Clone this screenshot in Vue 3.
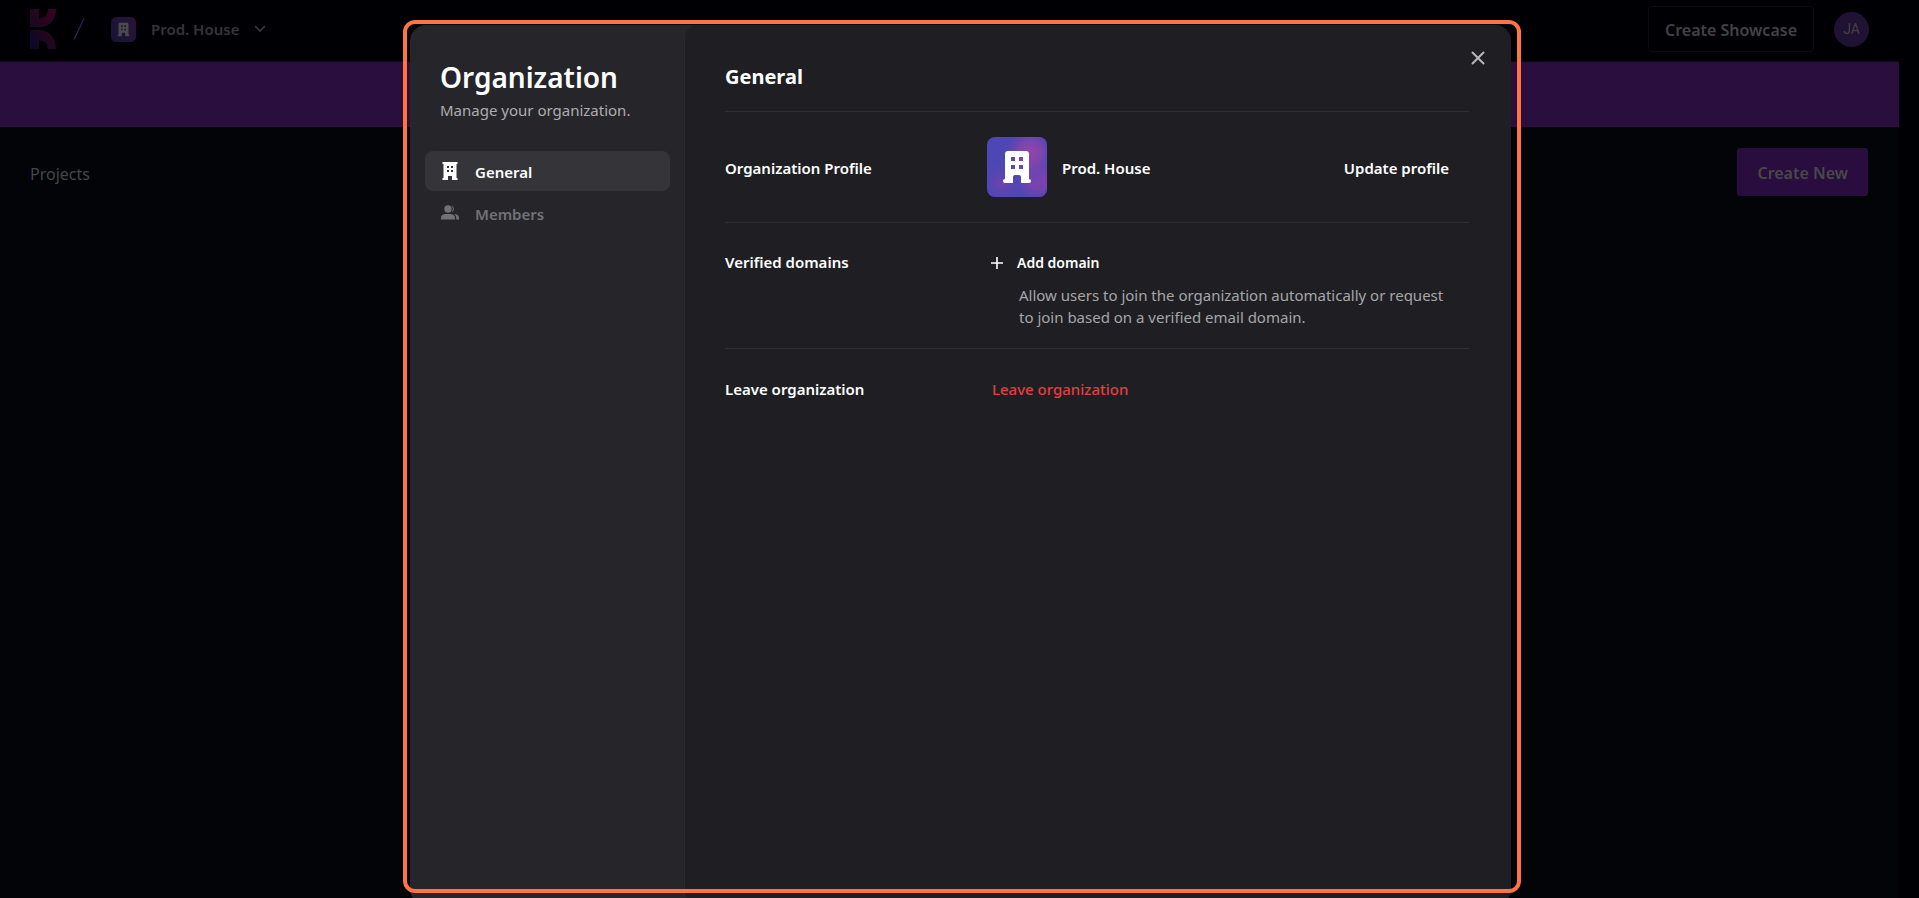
<script setup>
const navItems = [
  { id: 'general', label: 'General', active: true },
  { id: 'members', label: 'Members', active: false },
]
</script>

<template>
  <div class="screen">
    <div class="page">
      <header class="topbar">
        <a class="logo" href="#" aria-label="Home">
          <svg width="26" height="40" viewBox="0 0 26 40">
            <defs>
              <linearGradient id="logoFill" x1="1" y1="0" x2="0" y2="1">
                <stop offset="0" stop-color="#38031f" />
                <stop offset="0.5" stop-color="#21071f" />
                <stop offset="1" stop-color="#09082a" />
              </linearGradient>
            </defs>
            <path fill="url(#logoFill)" d="M0 0h9v9.500q9-1 9-9.500h8c0 11-7 18-17 18H0zM0 21h9c10 0 17 8 17 19h-8q0-8-9-9v9H0z" />
          </svg>
        </a>
        <svg class="slash" width="12" height="22" viewBox="0 0 12 22"><path d="M11 0.500 1 21.500" stroke="#382150" stroke-width="1.200" /></svg>
        <button class="org-switch" type="button">
          <svg class="org-icon" width="25" height="25" viewBox="0 0 60 60">
            <defs>
              <linearGradient id="dimFill" x1="0" y1="0.800" x2="1" y2="0.200">
                <stop offset="0" stop-color="#171438" />
                <stop offset="1" stop-color="#2a1437" />
              </linearGradient>
            </defs>
            <rect width="60" height="60" rx="13" fill="url(#dimFill)" />
            <path fill="#4a4a4c" fill-rule="evenodd" d="M18 17a3 3 0 0 1 3-3h18a3 3 0 0 1 3 3v25a2 2 0 0 1 0 4h-8v-6q0-2-2-2h-4q-2 0-2 2v6h-8a2 2 0 0 1 0-4zm6 3v4h4v-4zm8 0v4h4v-4zm-8 8v4h4v-4zm8 0v4h4v-4z" />
          </svg>
          <span>Prod. House</span>
          <svg width="12" height="8" viewBox="0 0 12 8"><path d="M1.500 1.500 6 6l4.500-4.500" fill="none" stroke="#3a3b3e" stroke-width="1.600" stroke-linecap="round" /></svg>
        </button>
        <button class="showcase" type="button">Create Showcase</button>
        <button class="user" type="button">JA</button>
      </header>
      <div class="banner"></div>
      <main class="projects">
        <h1>Projects</h1>
        <button class="create" type="button">Create New</button>
      </main>
    </div>

    <div class="overlay">
      <section class="dialog" role="dialog" aria-label="Organization">
        <aside class="sidebar">
          <h2>Organization</h2>
          <p>Manage your organization.</p>
          <nav>
            <button v-for="item in navItems" :key="item.id" type="button" class="nav-item" :class="{ active: item.active }">
              <svg v-if="item.id === 'general'" width="18" height="18" viewBox="0 0 18 18">
                <path fill="currentColor" fill-rule="evenodd" d="M1.500 0h15v2h-1v14h1v2H11v-4H7v4H1.500v-2h1V2h-1zM6 4v2h2V4zm4 0v2h2V4zM6 8v2h2V8zm4 0v2h2V8z" />
              </svg>
              <svg v-else width="18" height="18" viewBox="0 0 18 18">
                <g fill="currentColor">
                  <circle cx="7" cy="5" r="3.700" />
                  <path d="M0 15.500V14c0-2.500 2-4 4.500-4h5c2.500 0 4.500 1.500 4.500 4v1.500zM10.300 1.500a3.700 3.700 0 0 1 0 7.100 5.300 5.300 0 0 0 0-7.100zM13 10c3 0 5 1.500 5 4v1.500h-2.800V14c0-1.700-.8-3.100-2.200-4z" />
                </g>
              </svg>
              <span>{{ item.label }}</span>
            </button>
          </nav>
        </aside>

        <div class="content">
          <button class="close" type="button" aria-label="Close">
            <svg width="14" height="14" viewBox="0 0 14 14"><path d="m1.500 1.500 11 11m0-11-11 11" stroke="#b7b7b9" stroke-width="2" stroke-linecap="round" /></svg>
          </button>
          <h3>General</h3>
          <div class="row profile">
            <h4>Organization Profile</h4>
            <div class="profile-body">
              <svg width="60" height="60" viewBox="0 0 60 60">
                <defs>
                  <radialGradient id="glowTop" cx="0.720" cy="0.260" r="0.480">
                    <stop offset="0" stop-color="#9345a9" />
                    <stop offset="0.400" stop-color="#8545ac" stop-opacity="0.850" />
                    <stop offset="1" stop-color="#4c47b5" stop-opacity="0" />
                  </radialGradient>
                  <radialGradient id="glowRight" cx="0.850" cy="0.700" r="0.450">
                    <stop offset="0" stop-color="#7b43ae" />
                    <stop offset="0.400" stop-color="#7843ae" stop-opacity="0.900" />
                    <stop offset="1" stop-color="#4c47b5" stop-opacity="0" />
                  </radialGradient>
                  <radialGradient id="glowLeft" cx="0.250" cy="0.780" r="0.400">
                    <stop offset="0" stop-color="#7043ac" />
                    <stop offset="1" stop-color="#4c47b5" stop-opacity="0" />
                  </radialGradient>
                </defs>
                <rect width="60" height="60" rx="8" fill="#4c47b5" />
                <rect width="60" height="60" rx="8" fill="url(#glowLeft)" />
                <rect width="60" height="60" rx="8" fill="url(#glowRight)" />
                <rect width="60" height="60" rx="8" fill="url(#glowTop)" />
                <path fill="#fff" fill-rule="evenodd" d="M18 17a3 3 0 0 1 3-3h18a3 3 0 0 1 3 3v25a2 2 0 0 1 0 4h-8v-6q0-2-2-2h-4q-2 0-2 2v6h-8a2 2 0 0 1 0-4zm6 3v4h4v-4zm8 0v4h4v-4zm-8 8v4h4v-4zm8 0v4h4v-4z" />
              </svg>
              <span class="name">Prod. House</span>
              <button class="update" type="button">Update profile</button>
            </div>
          </div>
          <div class="row domains">
            <h4>Verified domains</h4>
            <div>
              <button class="add" type="button">
                <svg width="12" height="12" viewBox="0 0 12 12"><path d="M6 0v12M0 6h12" stroke="currentColor" stroke-width="1.600" /></svg>
                <span>Add domain</span>
              </button>
              <p>Allow users to join the organization automatically or request to join based on a verified email domain.</p>
            </div>
          </div>
          <div class="row leave-row">
            <h4>Leave organization</h4>
            <button class="leave" type="button">Leave organization</button>
          </div>
        </div>
      </section>
      <div class="focus-frame"></div>
    </div>
  </div>
</template>

<style>
body {
  margin: 0;
  background: #000004;
}
</style>

<style scoped>
.screen {
  position: relative;
  height: 100vh;
  overflow: hidden;
  font-family: "Noto Sans", "Open Sans", sans-serif;
  font-size: 15px;
  line-height: 22px;
}
h1, h2, h3, h4, p {
  margin: 0;
}
button {
  padding: 0;
  border: 0;
  background: none;
  color: inherit;
  font: inherit;
  cursor: pointer;
}
svg {
  display: block;
  flex: none;
}
.page {
  display: flex;
  flex-direction: column;
  height: 100%;
  margin-right: 20px;
  background: #030408;
}
.topbar {
  display: flex;
  align-items: center;
  height: 62px;
  padding: 0 30px 3px;
  box-sizing: border-box;
  background: #000004;
  border-bottom: 1px solid #0b0911;
}
.slash {
  margin: 0 26px 0 17px;
}
.org-switch {
  display: flex;
  align-items: center;
  gap: 15px;
  color: #343538;
  font-weight: 600;
}
.showcase {
  height: 46px;
  margin-left: auto;
  padding: 2px 16px 0;
  border: 1px solid #0b0c11;
  border-radius: 4px;
  color: #434343;
  font-size: 16px;
  font-weight: 600;
}
.user {
  width: 35px;
  height: 35px;
  margin-left: 20px;
  border-radius: 50%;
  background: #1f1232;
  color: #444048;
  font-family: Roboto, sans-serif;
  font-size: 14px;
}
.banner {
  height: 65px;
  background: #290e3e;
}
.projects {
  display: flex;
  justify-content: space-between;
  padding: 21px 31px 0 30px;
}
.projects h1 {
  color: #454647;
  font-size: 16px;
  font-weight: 400;
  line-height: 52px;
}
.create {
  height: 48px;
  padding: 2px 20px 0;
  border-radius: 3px;
  background: #290d3e;
  color: #484848;
  font-size: 16px;
  font-weight: 600;
}
.overlay {
  position: absolute;
  inset: 0;
  display: flex;
  justify-content: center;
  align-items: flex-start;
  padding: 25px 0 0 2px;
}
.dialog {
  display: flex;
  width: 1101px;
  max-width: 90%;
  min-height: 880px;
  border-radius: 16px;
  overflow: hidden;
  background: #26262a;
  color: #fff;
}
.sidebar {
  flex: none;
  width: 245px;
  padding: 30px 14px 30px 15px;
}
.sidebar h2 {
  padding: 4px 15px 0;
  font-size: 28px;
  font-weight: 600;
  line-height: 36px;
}
.sidebar p {
  padding: 4px 15px 0;
  color: #adadaf;
}
nav {
  display: flex;
  flex-direction: column;
  gap: 2px;
  margin-top: 30px;
}
.nav-item {
  display: flex;
  align-items: center;
  gap: 16px;
  height: 40px;
  padding: 0 16px;
  border-radius: 8px;
  color: #727275;
  font-weight: 600;
}
.nav-item span {
  padding-top: 2px;
}
.nav-item.active {
  background: #353539;
  color: #fff;
}
.content {
  position: relative;
  flex: 1;
  padding: 36px 42px 36px 40px;
  border-left: 1px solid #2b2b2f;
  border-radius: 12px 0 0 12px;
  background: #1f1f23;
}
.close {
  position: absolute;
  top: 16px;
  right: 16px;
  padding: 10px;
}
h3 {
  padding-bottom: 18px;
  font-size: 20px;
  font-weight: 700;
  line-height: 32px;
}
.row {
  display: grid;
  grid-template-columns: 262px 1fr;
  border-top: 1px solid #2f2f33;
}
h4 {
  font-size: 15px;
  font-weight: 600;
}
.profile {
  align-items: center;
  height: 110px;
}
.profile-body {
  display: flex;
  align-items: center;
  gap: 15px;
  font-weight: 600;
}
.profile h4,
.name,
.update {
  padding-top: 2px;
}
.update {
  margin-left: auto;
  margin-right: 20px;
}
.domains {
  padding: 28px 0 18px;
}
.add {
  display: flex;
  align-items: center;
  gap: 14px;
  padding: 1px 0 0 4px;
  font-size: 14px;
  font-weight: 600;
}
.domains p {
  padding: 10px 16px 2px 32px;
  color: #a6a6a8;
}
.leave-row {
  padding-top: 29px;
}
.leave {
  justify-self: start;
  padding-left: 5px;
  color: #e13f3f;
  font-weight: 500;
}
.focus-frame {
  position: absolute;
  top: 20px;
  right: 398px;
  bottom: 5px;
  left: 403px;
  border: 4px solid #ff7441;
  border-radius: 12px;
  pointer-events: none;
}
@media (max-width: 1240px) {
  .focus-frame {
    right: 4%;
    left: 4%;
  }
}
</style>
